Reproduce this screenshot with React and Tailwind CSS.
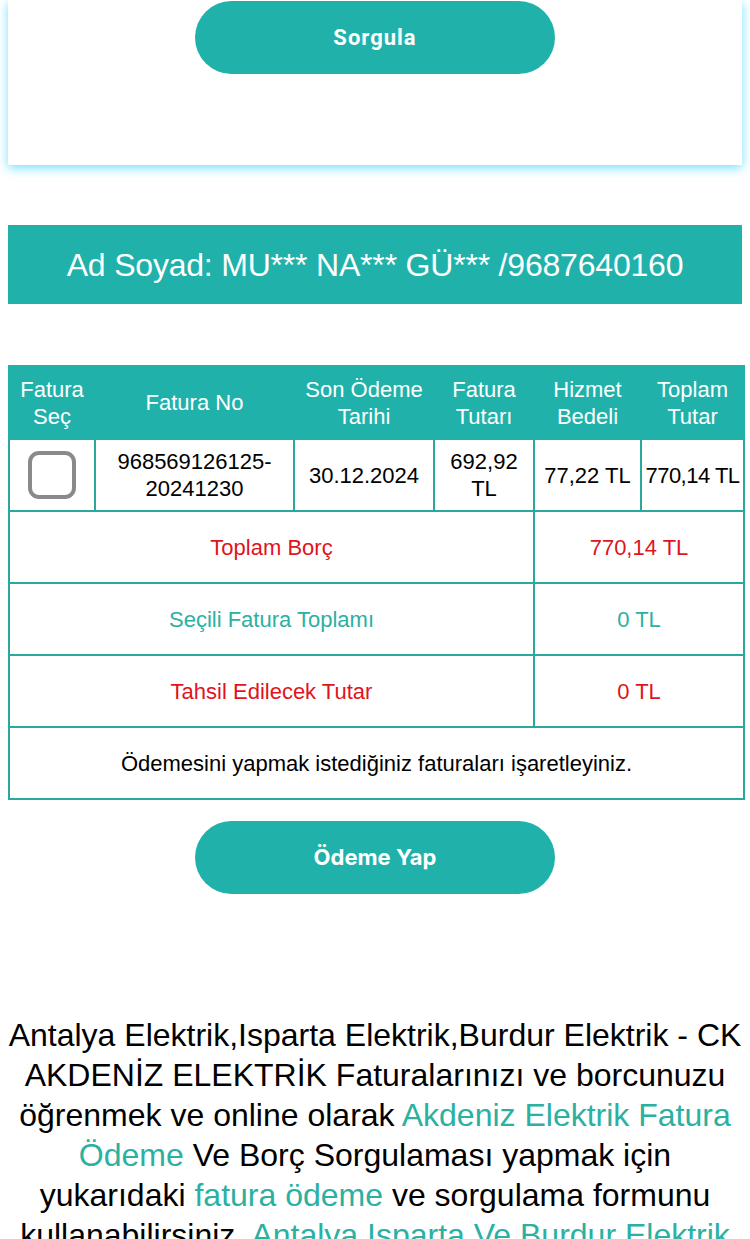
import React from 'react';

const teal = 'bg-[#20b2aa]';

const App = () => {
    return (
        <div className="min-h-[1239px] bg-white font-['Liberation_Sans',Arial,sans-serif] overflow-hidden">
            {/* Kart: Sorgula */}
            <div className="mx-2 bg-white h-[165px] pt-[1px] shadow-[0_3px_10px_rgba(0,200,255,0.55)]">
                <button className={`block mx-auto w-[360px] h-[73px] rounded-full ${teal} text-white text-[22px] tracking-[1px] font-bold font-['Roboto',sans-serif]`}>
                    Sorgula
                </button>
            </div>

            {/* Ad Soyad */}
            <div className={`mx-2 mt-[60px] h-[79px] ${teal} flex items-center justify-center text-white text-[32px] tracking-[-0.2px]`}>
                Ad Soyad: MU*** NA*** GÜ*** /9687640160
            </div>

            {/* Fatura tablosu */}
            <table className="mx-2 mt-[61px] w-[735px] table-fixed border-collapse text-[22px] leading-[27px] text-center">
                <colgroup>
                    <col className="w-[86px]" />
                    <col className="w-[199px]" />
                    <col className="w-[140px]" />
                    <col className="w-[100px]" />
                    <col className="w-[107px]" />
                    <col className="w-[103px]" />
                </colgroup>
                <thead>
                    <tr className={`h-[73px] ${teal} text-white`}>
                        <th className="font-normal border-2 border-[#20b2aa]">Fatura<br />Seç</th>
                        <th className="font-normal border-2 border-[#20b2aa]">Fatura No</th>
                        <th className="font-normal border-2 border-[#20b2aa]">Son Ödeme<br />Tarihi</th>
                        <th className="font-normal border-2 border-[#20b2aa]">Fatura<br />Tutarı</th>
                        <th className="font-normal border-2 border-[#20b2aa]">Hizmet<br />Bedeli</th>
                        <th className="font-normal border-2 border-[#20b2aa]">Toplam<br />Tutar</th>
                    </tr>
                </thead>
                <tbody className="text-black">
                    <tr className="h-[72px]">
                        <td className="border-2 border-[#2aa89e]">
                            <div className="mx-auto w-[48px] h-[48px] rounded-[11px] border-[4px] border-[#8a8a8a]" />
                        </td>
                        <td className="border-2 border-[#2aa89e]">968569126125-<br />20241230</td>
                        <td className="border-2 border-[#2aa89e]">30.12.2024</td>
                        <td className="border-2 border-[#2aa89e]">692,92<br />TL</td>
                        <td className="border-2 border-[#2aa89e]">77,22 TL</td>
                        <td className="border-2 border-[#2aa89e] whitespace-nowrap tracking-[-0.5px]">770,14 TL</td>
                    </tr>
                    <tr className="h-[72px] text-[#e0141c]">
                        <td colSpan={4} className="border-2 border-[#2aa89e]">Toplam Borç</td>
                        <td colSpan={2} className="border-2 border-[#2aa89e]">770,14 TL</td>
                    </tr>
                    <tr className="h-[72px] text-[#2bb0a2]">
                        <td colSpan={4} className="border-2 border-[#2aa89e]">Seçili Fatura Toplamı</td>
                        <td colSpan={2} className="border-2 border-[#2aa89e]">0 TL</td>
                    </tr>
                    <tr className="h-[72px] text-[#e0141c]">
                        <td colSpan={4} className="border-2 border-[#2aa89e]">Tahsil Edilecek Tutar</td>
                        <td colSpan={2} className="border-2 border-[#2aa89e]">0 TL</td>
                    </tr>
                    <tr className="h-[72px]">
                        <td colSpan={6} className="border-2 border-[#2aa89e]">Ödemesini yapmak istediğiniz faturaları işaretleyiniz.</td>
                    </tr>
                </tbody>
            </table>

            {/* Ödeme Yap */}
            <button className={`block mx-auto mt-[21px] w-[360px] h-[73px] rounded-full ${teal} text-white text-[22px] font-bold font-['Inter',sans-serif]`}>
                Ödeme Yap
            </button>

            {/* Açıklama metni */}
            <p className="mt-[121px] px-2 text-center text-[32px] leading-[40px] text-black">
                Antalya Elektrik,Isparta Elektrik,Burdur Elektrik - CK AKDENİZ ELEKTRİK Faturalarınızı ve borcunuzu öğrenmek ve online olarak{' '}
                <span className="text-[#2bb0a2]">Akdeniz Elektrik Fatura Ödeme</span> Ve Borç Sorgulaması yapmak için yukarıdaki{' '}
                <span className="text-[#2bb0a2]">fatura ödeme</span> ve sorgulama formunu kullanabilirsiniz.{' '}
                <span className="text-[#2bb0a2]">Antalya Isparta Ve Burdur Elektrik</span> faturalarınızı buradan ödeyebilirsiniz.
            </p>
        </div>
    );
};

export default App;
